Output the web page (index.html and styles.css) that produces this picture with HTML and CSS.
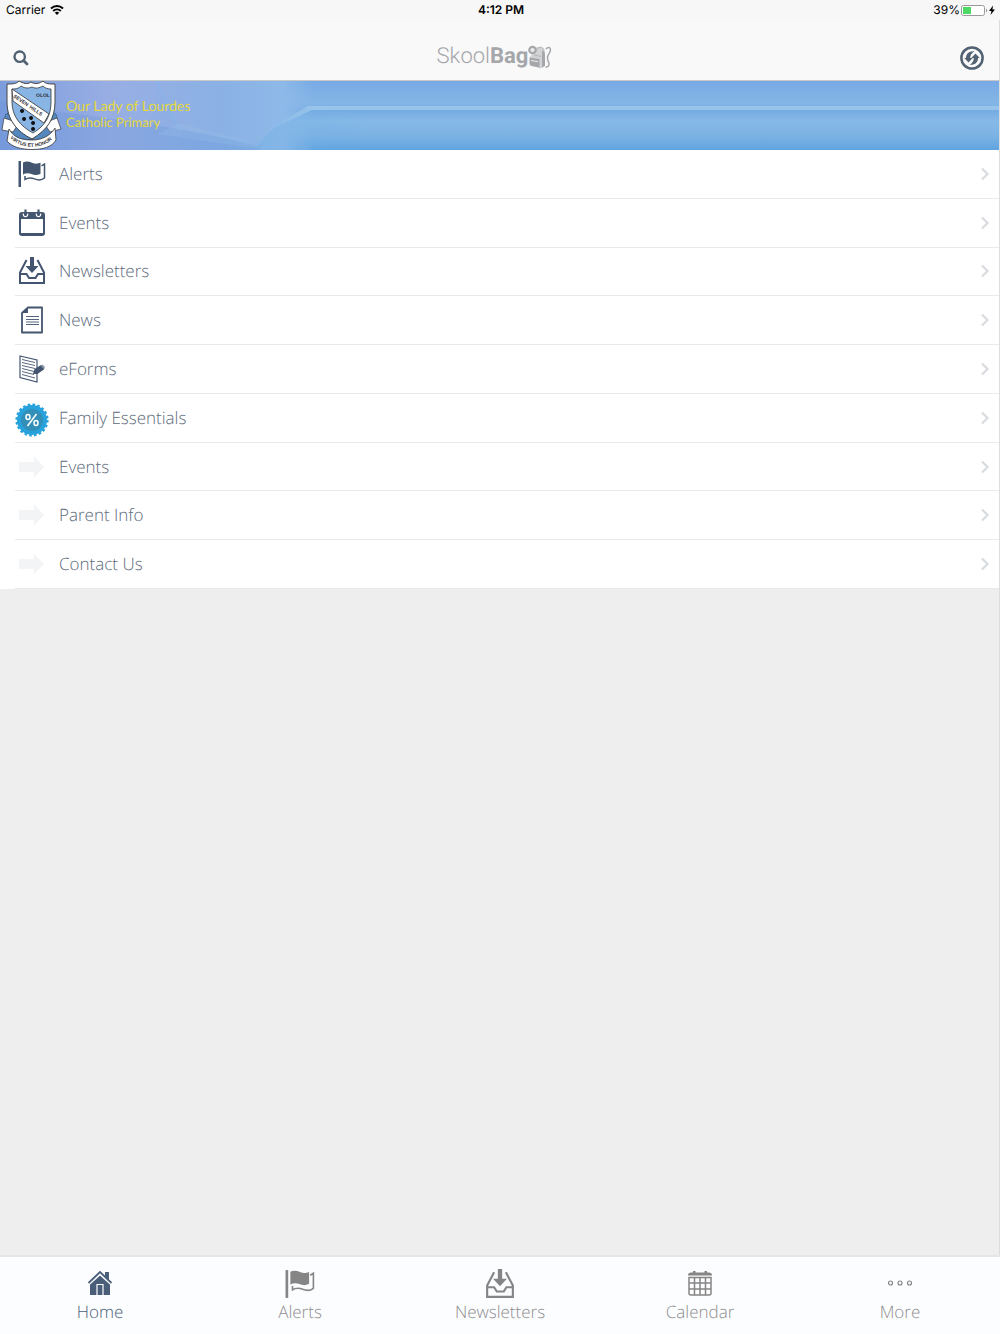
FILE: index.html
```html
<!DOCTYPE html>
<html lang="en">
<head>
    <meta charset="UTF-8">
    <meta name="viewport" content="width=device-width, initial-scale=1.0">
    <title>SkoolBag</title>
    <link rel="stylesheet" href="styles.css">
</head>
<body>
    <!-- Shared icons -->
    <svg class="sprite" aria-hidden="true">
        <symbol id="flag" viewBox="0 0 28 28">
            <path d="M.5 1h2.500v26H.5z"/>
            <path d="M5 2.500c3-1.500 6-1 9 .3 3 1.200 6 1 8.500 0v11c-3 1.700-6 1.700-9 .3-3-1.300-6-1-8.500.3z"/>
            <path d="M23.500 5.800 26.500 4v14c-3 2.400-6 2.500-10 .9-3.500-1.500-6-1.600-9.500.5v-3.500" fill="none" stroke="currentColor" stroke-width="1.500"/>
        </symbol>
        <symbol id="inbox" viewBox="0 0 28 28">
            <path d="M12 0h4v9h4.500L14 16 7.500 9H12z"/>
            <path d="M8.500 3 2 15.500V26h24V15.500L19.500 3M2 17h6.500l2.500 4h6.500l2.500-4H26" fill="none" stroke="currentColor" stroke-width="2"/>
        </symbol>
        <symbol id="arrow" viewBox="0 0 28 28">
            <path d="M1 9h15V3.500L26 14 16 24.500V19H1z"/>
        </symbol>
        <symbol id="chevron" viewBox="0 0 10 14">
            <path d="M2 1.500 7.500 7 2 12.500" fill="none" stroke="currentColor" stroke-width="2.200"/>
        </symbol>
    </svg>

    <div class="status-bar">
        <div class="carrier">
            <span>Carrier</span>
            <svg width="14" height="10" viewBox="0 0 14 10" fill="none" stroke="#000" stroke-width="2">
                <path d="M1 3.500a8.700 8.700 0 0 1 12 0M3.200 6a5.500 5.500 0 0 1 7.600 0"/>
                <path d="M4.800 7.800 7 10l2.200-2.200a3.200 3.200 0 0 0-4.400 0z" fill="#000" stroke="none"/>
            </svg>
        </div>
        <div class="clock">4:12 PM</div>
        <div class="battery">
            <span>39%</span>
            <svg width="36" height="12" viewBox="0 0 36 12">
                <rect x="1.500" y="1.500" width="23" height="10" rx="2" fill="#fff" stroke="#999"/>
                <path d="M3 3h8v7H3z" fill="#4cd964"/>
                <path d="M26 4.500c1.500.5 1.500 3.500 0 4z" fill="#999"/>
                <path d="m33 1.500-4 5.500h2.500L30.500 11l4.500-5.500h-2.500z"/>
            </svg>
        </div>
    </div>

    <header class="header">
        <button class="icon-button" type="button" aria-label="Search">
            <svg width="16" height="16" viewBox="0 0 16 16" fill="none" stroke="currentColor" stroke-width="2.400">
                <circle cx="6.700" cy="6.700" r="5.200"/>
                <path d="m10.500 10.500 3.500 3.500" stroke-width="2.800" stroke-linecap="round"/>
            </svg>
        </button>
        <h1 class="logo">
            <span class="logo-text">Skool<b>Bag</b></span>
            <svg width="24" height="24" viewBox="0 0 24 24">
                <path d="M4 9c0-5 3-7 7-7s6 2 6 6v13l-4 2.500-11-3v-8z" fill="#d2d3d5"/>
                <path d="M1.500 12.500 11.500 14v8.500L4 21c-2-.5-2.500-1-2.500-3z" fill="#a5a7aa"/>
                <path d="m3 15.500 7 1.200" stroke="#eee"/>
                <path d="M14.500 5c2 1 2.500 3 2.500 6v9.500l-3 2V11c0-2 0-4 .5-6z" fill="#a5a7aa"/>
                <path d="M9 4c2-3 6-2 7 1M6 10l7 1.500" fill="none" stroke="#b4b6b8"/>
                <path d="M18 4c2-2.500 4.500-2 4.500 1s-3 4-3 8 2 4 1.500 6.500-1.500 2.500-3.500 2.500" fill="none" stroke="#a5a7aa" stroke-width="1.500"/>
                <circle cx="4.500" cy="5" r="3.200" fill="#eee" stroke="#a5a7aa" stroke-width="2.200"/>
            </svg>
        </h1>
        <button class="icon-button" type="button" aria-label="Refresh">
            <svg width="24" height="24" viewBox="0 0 24 24">
                <circle cx="12" cy="12" r="10.600" fill="none" stroke="currentColor" stroke-width="2.500"/>
                <path id="turn" d="M14.500 5.200C8.500 4.800 6 8 6 12H4.300l4.200 4.500 4.200-4.500h-2.500c0-3 1.300-5 4.300-6.800z" fill="currentColor"/>
                <use href="#turn" transform="rotate(180 12 12)"/>
            </svg>
        </button>
    </header>

    <main class="content">
        <section class="banner">
            <svg class="banner-sky" viewBox="0 0 1000 69" preserveAspectRatio="none" aria-hidden="true">
                <defs>
                    <linearGradient id="base" x2="0" y2="1">
                        <stop offset="0" stop-color="#78a9e5"/>
                        <stop offset=".32" stop-color="#84b6e6"/>
                        <stop offset=".43" stop-color="#76abe2"/>
                        <stop offset=".58" stop-color="#86b9e7"/>
                        <stop offset=".8" stop-color="#7bb2e4"/>
                        <stop offset="1" stop-color="#60a4df"/>
                    </linearGradient>
                    <linearGradient id="haze">
                        <stop offset="0" stop-color="#7c9ddd"/>
                        <stop offset=".35" stop-color="#98aee3"/>
                        <stop offset=".7" stop-color="#8bb1e4"/>
                        <stop offset=".9" stop-color="#8db9e8"/>
                        <stop offset="1" stop-color="#8db9e8" stop-opacity="0"/>
                    </linearGradient>
                    <linearGradient id="ray">
                        <stop offset="0" stop-color="#6e9fe0" stop-opacity="0"/>
                        <stop offset="1" stop-color="#65a2df" stop-opacity=".8"/>
                    </linearGradient>
                    <linearGradient id="glow" gradientUnits="userSpaceOnUse" x1="265" y1="0" x2="315" y2="0">
                        <stop offset="0" stop-color="#a2cbed" stop-opacity="0"/>
                        <stop offset="1" stop-color="#a2cbed" stop-opacity=".75"/>
                    </linearGradient>
                    <linearGradient id="shade">
                        <stop offset="0" stop-color="#6fb0e6" stop-opacity=".4"/>
                        <stop offset="1" stop-color="#6fb0e6" stop-opacity="0"/>
                    </linearGradient>
                </defs>
                <path d="M0 0h1000v69H0z" fill="url(#base)"/>
                <path d="M0 0h315v69H0z" fill="url(#haze)"/>
                <path d="M0 20 60 31c70 9 140 18 200 35v3H0z" fill="#608fd7" opacity=".25"/>
                <path d="M157 0 178 48l86 16-8 5H120C145 52 160 28 157 0z" fill="url(#ray)" opacity=".3"/>
                <path d="M157 0 180 50" fill="none" stroke="#84b6ed"/>
                <path d="m180 42 82 22-4 4-100-15z" fill="#a1c7ed" opacity=".2"/>
                <path d="M256 69c8-16 28-32 54-41h60v41z" fill="url(#shade)"/>
                <path d="M270 48 308 25h692v4H312l-42 20z" fill="url(#glow)"/>
            </svg>
            <svg class="crest" viewBox="0 0 60 69" role="img" aria-label="School crest">
                <path d="M5 33c-2 3 0 6 3 8v17l44 1V42c4-2 5-5 3-9L40 28H18z" fill="#5487bd" stroke="#24466c" stroke-dasharray="1 1"/>
                <path d="M3 37 1 49l11 2 6-9zM56 37l4 11-11 3-6-9z" fill="#fff" stroke="#333" stroke-width=".7"/>
                <path d="M6 3c6 0 9 0 12-3 4 2 8 4 12 1 5 3 9 1 12-1 3 3 6 3 12 3v18c0 17-8 28-23 37C15 50 6 38 6 21z" fill="#fff" stroke="#444"/>
                <path d="M11 8c5 0 7-1 9-3 5 3 8 2 11 1 4 2 7 1 11-1 2 2 4 3 8 3v13c0 14-6 24-18 31-13-7-21-17-21-31z" fill="#89b5e5" stroke="#333" stroke-width=".8"/>
                <path d="m11 8 37 25-5 9L12 20z" fill="#fff" stroke="#333" stroke-width=".8"/>
                <path id="band-left" d="m12 16 18 12" fill="none"/>
                <path id="band-right" d="m28 27 18 12" fill="none"/>
                <text class="crest-text"><textPath href="#band-left">SEVEN</textPath></text>
                <text class="crest-text"><textPath href="#band-right">HILLS</textPath></text>
                <text class="crest-text" x="35" y="16">OLOL</text>
                <path d="M21 28a2 2 0 1 0 .1 0M23 36a2 2 0 1 0 .1 0M30 35a2 2 0 1 0 .1 0M32 40a2 2 0 1 0 .1 0M32 46a2 2 0 1 0 .1 0" fill="#111"/>
                <path d="M8 48c5 9 13 11 23 11s18-4 23-12l1 12c-4 7-13 9.500-24 9.500S11 66 6 60z" fill="#fff" stroke="#333" stroke-width=".8"/>
                <path id="motto" d="M9 57c12 12 33 12 45-1" fill="none"/>
                <text class="crest-text"><textPath href="#motto">VIRTUS ET HONOR</textPath></text>
            </svg>
            <p class="school-name">Our Lady of Lourdes <small>Catholic Primary</small></p>
        </section>

        <ul class="menu">
            <li><a href="#alerts">
                <svg class="menu-icon"><use href="#flag"/></svg>
                <span>Alerts</span>
                <svg class="chevron"><use href="#chevron"/></svg>
            </a></li>
            <li><a href="#events">
                <svg class="menu-icon" viewBox="0 0 28 28">
                    <path fill-rule="evenodd" d="M4 3h20q3 0 3 3v18q0 3-3 3H4q-3 0-3-3V6q0-3 3-3zM3 10v14h22V10z"/>
                    <path d="M5.200 4.500q0 3.200 2.300 3.200t2.300-3.200M18.200 4.500q0 3.200 2.300 3.200t2.300-3.200" fill="none" stroke="#fff" stroke-width="1.100"/>
                    <path d="M7.500.5V6M20.500.5V6" stroke="currentColor" stroke-width="2.200"/>
                </svg>
                <span>Events</span>
                <svg class="chevron"><use href="#chevron"/></svg>
            </a></li>
            <li><a href="#newsletters">
                <svg class="menu-icon"><use href="#inbox"/></svg>
                <span>Newsletters</span>
                <svg class="chevron"><use href="#chevron"/></svg>
            </a></li>
            <li><a href="#news">
                <svg class="menu-icon" viewBox="0 0 28 28">
                    <path d="M10 1.500h14v25H4V7z" fill="none" stroke="currentColor" stroke-width="1.800" stroke-linejoin="round"/>
                    <path d="M10 1v6H4z"/>
                    <path d="M8 10.500h13M8 13.500h13M8 16h13M8 18.500h13" stroke="currentColor" stroke-width=".9"/>
                </svg>
                <span>News</span>
                <svg class="chevron"><use href="#chevron"/></svg>
            </a></li>
            <li><a href="#eforms">
                <svg class="menu-icon" viewBox="0 0 28 28">
                    <path d="m2 1 17 4v22L2 22.500z" fill="none" stroke="currentColor" stroke-width="1.200"/>
                    <path d="m4 4.500 13 3M4 7.500l13 3M4 10.500l13 3M4 13.500l12 3M4 16.500l12 3M4 19.500l13 3.500" stroke="currentColor" stroke-width=".9"/>
                    <path d="m15 19 1.500-5 6.500-4 3.500 4-7 5z"/>
                    <path d="m22.500 10.500 2-1 2.500 2.500-1 2z" fill="#8d98a8"/>
                </svg>
                <span>eForms</span>
                <svg class="chevron"><use href="#chevron"/></svg>
            </a></li>
            <li><a href="#essentials">
                <svg class="menu-icon badge" viewBox="0 0 34 34">
                    <circle cx="17" cy="17" r="15" fill="#27a2dc"/>
                    <circle cx="17" cy="17" r="15.200" fill="none" stroke="#27a2dc" stroke-width="2.800" stroke-dasharray="2.600 2.175"/>
                    <circle cx="17" cy="17" r="11" fill="#318fb8"/>
                    <path d="m21.500 11-9 12" stroke="#fff" stroke-width="1.600"/>
                    <ellipse cx="13" cy="14" rx="2" ry="2.500" fill="none" stroke="#fff" stroke-width="1.500"/>
                    <ellipse cx="21" cy="20" rx="2" ry="2.500" fill="none" stroke="#fff" stroke-width="1.500"/>
                </svg>
                <span>Family Essentials</span>
                <svg class="chevron"><use href="#chevron"/></svg>
            </a></li>
            <li><a href="#school-events">
                <svg class="menu-icon pale"><use href="#arrow"/></svg>
                <span>Events</span>
                <svg class="chevron"><use href="#chevron"/></svg>
            </a></li>
            <li><a href="#parents">
                <svg class="menu-icon pale"><use href="#arrow"/></svg>
                <span>Parent Info</span>
                <svg class="chevron"><use href="#chevron"/></svg>
            </a></li>
            <li><a href="#contact">
                <svg class="menu-icon pale"><use href="#arrow"/></svg>
                <span>Contact Us</span>
                <svg class="chevron"><use href="#chevron"/></svg>
            </a></li>
        </ul>
    </main>

    <nav class="tab-bar">
        <a class="active" href="#home">
            <svg viewBox="0 0 30 30">
                <path d="M5 15.500 15 6.500l10 9V26H5z"/>
                <path d="M3.500 14 15 3l11.500 11" fill="none" stroke="currentColor" stroke-width="1.800"/>
                <path d="M20 3h4v9l-4-4z"/>
                <path d="m4.500 15.500 10.500-10 10.500 10" fill="none" stroke="#fcfdff" stroke-width=".9"/>
                <path d="M12 26V15.500h6V26" fill="none" stroke="#fcfdff" stroke-width="1.200"/>
            </svg>
            <span>Home</span>
        </a>
        <a href="#alerts">
            <svg><use href="#flag"/></svg>
            <span>Alerts</span>
        </a>
        <a href="#newsletters">
            <svg><use href="#inbox"/></svg>
            <span>Newsletters</span>
        </a>
        <a href="#calendar">
            <svg viewBox="0 0 30 30">
                <path d="M3 6.500q0-3 3-3h2V2h2.500v1.500h9V2H22v1.500h2q3 0 3 3z"/>
                <path d="M4 8.500h22V24q0 2-2 2H6q-2 0-2-2zM4 14h22M4 20h22M9.500 8v18M15 8v18M20.500 8v18" fill="none" stroke="currentColor" stroke-width="1.500"/>
            </svg>
            <span>Calendar</span>
        </a>
        <a href="#more">
            <svg viewBox="0 0 30 30" fill="none" stroke="currentColor" stroke-width="1.200">
                <circle cx="5.500" cy="14" r="2"/>
                <circle cx="15" cy="14" r="2"/>
                <circle cx="24.500" cy="14" r="2"/>
            </svg>
            <span>More</span>
        </a>
    </nav>
</body>
</html>
```
FILE: styles.css
```css
* {
    box-sizing: border-box;
}
body {
    font-family: "Open Sans", sans-serif;
    font-weight: 300;
    font-size: 17px;
    line-height: 24px;
    text-rendering: geometricPrecision;
    background-color: #eee;
    color: #5d6b7c;
    margin: 0;
    min-height: 100vh;
    display: flex;
    flex-direction: column;
}
a {
    color: inherit;
    text-decoration: none;
}
svg {
    display: block;
    flex: none;
}
svg:not([fill]) {
    fill: currentColor;
}
.sprite {
    display: none;
}
.status-bar {
    display: grid;
    grid-template-columns: 1fr auto 1fr;
    align-items: center;
    height: 20px;
    padding: 0 4px 0 6px;
    background-color: #f7f7f7;
    color: #000;
    font-family: Inter, sans-serif;
    font-size: 12px;
    font-weight: 400;
    line-height: 20px;
}
.carrier, .battery {
    display: flex;
    align-items: center;
    gap: 5px;
}
.battery {
    justify-content: flex-end;
    gap: 0;
}
.clock {
    font-weight: 600;
}
.header {
    display: flex;
    align-items: center;
    justify-content: space-between;
    padding: 15px 14px 0 12px;
    height: 61px;
    background-color: #f9f9f9;
    border-bottom: 1px solid #c8c8c8;
    border-right: 1px solid #ddd;
}
.icon-button {
    display: flex;
    padding: 0 1px;
    border: none;
    background: none;
    color: #526273;
    cursor: pointer;
}
.logo {
    display: flex;
    align-items: center;
    margin: 0;
    padding-bottom: 1px;
    color: #a5a7aa;
    font-family: Roboto, sans-serif;
    font-size: 22px;
    font-weight: 300;
}
.logo b {
    font-weight: 700;
}
.content {
    flex: 1;
    border-right: 1px solid #ddd;
}
.banner {
    display: flex;
    align-items: center;
    position: relative;
    height: 69px;
}
.banner-sky {
    position: absolute;
    width: 100%;
    height: 100%;
}
.crest {
    position: relative;
    width: 62px;
    height: 69px;
}
.crest-text {
    font: bold 5px "Liberation Sans", sans-serif;
    fill: #333;
}
.school-name {
    position: relative;
    margin: 0 0 4px 4px;
    color: #e5d83c;
    font-family: Lato, sans-serif;
    font-size: 14px;
    font-weight: 400;
    line-height: 16px;
}
.school-name small {
    display: block;
    font-size: 13px;
}
.menu {
    display: grid;
    grid-auto-rows: 1fr;
    min-height: 439px;
    margin: 0;
    padding: 0 0 0 15px;
    list-style: none;
    background-color: #fff;
}
.menu li {
    display: grid;
    border-bottom: 1px solid #e8ebee;
}
.menu a {
    display: flex;
    align-items: center;
    padding-right: 9px;
}
.menu span {
    flex: 1;
    margin-left: 12px;
}
.menu-icon {
    width: 28px;
    height: 28px;
    margin-left: 3px;
    margin-right: 1px;
    color: #43556f;
}
.menu .badge {
    width: 34px;
    height: 34px;
    margin: 4px -2px 0 0;
}
.menu .pale {
    color: #f3f4f6;
}
.chevron {
    width: 10px;
    height: 14px;
    color: #d8dbdf;
}
.tab-bar {
    display: grid;
    grid-template-columns: repeat(5, 1fr);
    padding: 12px 0 10px;
    background-color: #fcfdff;
    border-top: 2px solid #e6e6e6;
    color: #8e8e8e;
}
.tab-bar a {
    display: flex;
    flex-direction: column;
    align-items: center;
    gap: 1px;
}
.tab-bar svg {
    width: 30px;
    height: 30px;
    color: #858585;
}
.tab-bar .active, .tab-bar .active svg {
    color: #4b5e79;
}
```
